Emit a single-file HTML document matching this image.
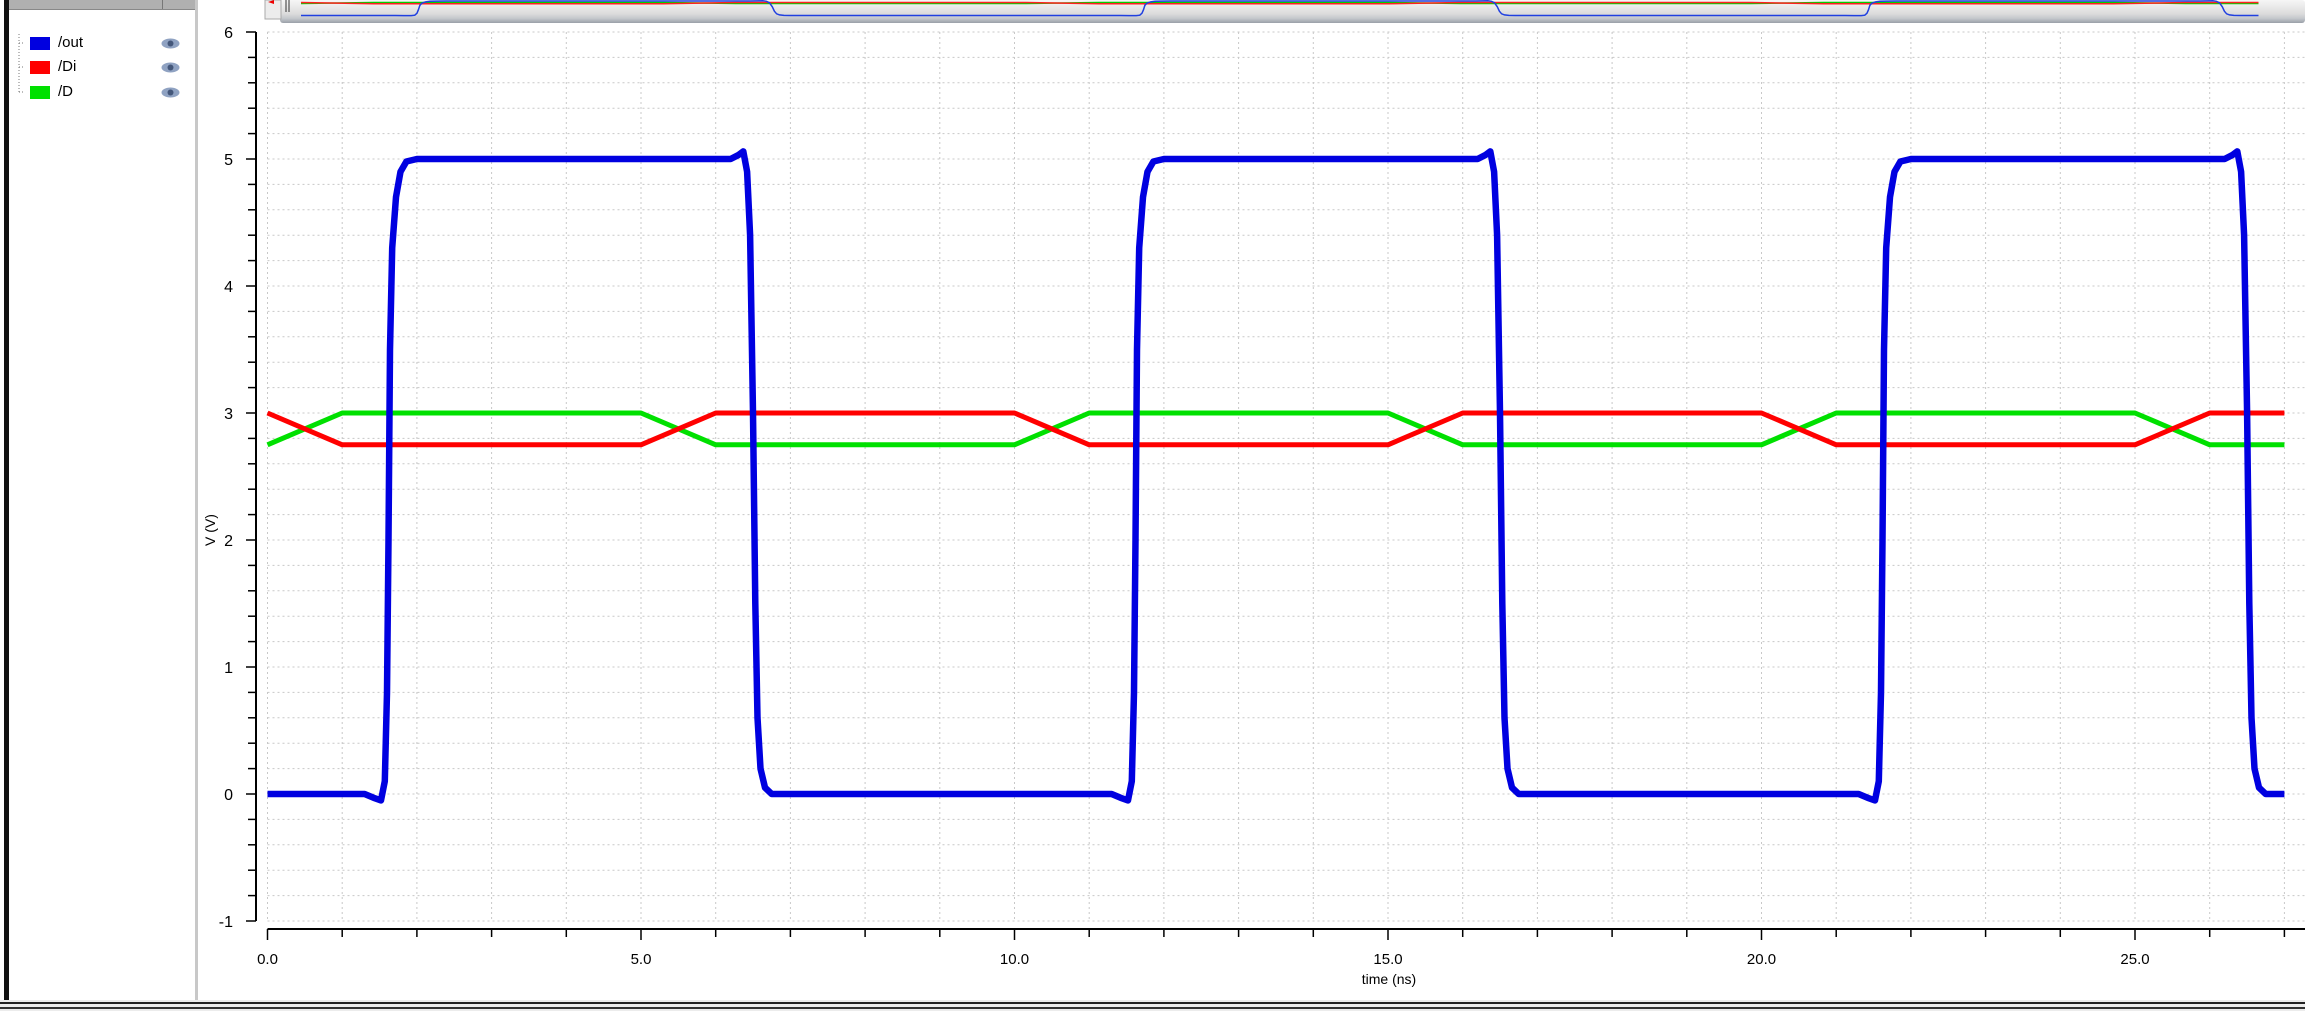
<!DOCTYPE html>
<html><head><meta charset="utf-8">
<style>
html,body{margin:0;padding:0;width:2305px;height:1011px;overflow:hidden;background:#fff;font-family:"Liberation Sans",sans-serif;}
#left{position:absolute;left:0;top:0;width:198px;height:1000px;background:#fff;}
#blk{position:absolute;left:4px;top:0;width:5px;height:1000px;background:#111;}
#hdr{position:absolute;left:9px;top:0;width:187px;height:9px;background:#b0b0b0;border-bottom:1px solid #888;}
#hdiv{position:absolute;left:153px;top:0;width:1px;height:9px;background:#777;}
#rb{position:absolute;left:195px;top:0;width:3px;height:1000px;background:#c8c8c8;}
.sw{position:absolute;left:30px;width:20px;height:13px;}
.lt{position:absolute;left:58px;font-size:15px;color:#000;}
.eye{position:absolute;left:161px;width:19px;height:11px;}
#bot{position:absolute;left:0;top:1000px;width:2305px;height:11px;background:#ececec;}
</style></head><body>
<div id="left">
<div id="blk"></div><div id="hdr"><div id="hdiv"></div></div><div id="rb"></div>
<svg style="position:absolute;left:0;top:0" width="60" height="100"><path d="M19 34V93M19 43H25M19 67H25M19 92H25" stroke="#777" stroke-dasharray="1,2" fill="none"/></svg>
<div class="sw" style="top:37px;background:#0000e0"></div><div class="lt" style="top:34px">/out</div>
<div class="sw" style="top:61px;background:#ff0000"></div><div class="lt" style="top:58px">/Di</div>
<div class="sw" style="top:86px;background:#00e000"></div><div class="lt" style="top:83px">/D</div>
<svg class="eye" style="top:38px" viewBox="0 0 19 11"><ellipse cx="9.5" cy="5.5" rx="9" ry="5" fill="#8fa2c2"/><circle cx="9.5" cy="5.5" r="3" fill="#44577a"/></svg>
<svg class="eye" style="top:62px" viewBox="0 0 19 11"><ellipse cx="9.5" cy="5.5" rx="9" ry="5" fill="#8fa2c2"/><circle cx="9.5" cy="5.5" r="3" fill="#44577a"/></svg>
<svg class="eye" style="top:87px" viewBox="0 0 19 11"><ellipse cx="9.5" cy="5.5" rx="9" ry="5" fill="#8fa2c2"/><circle cx="9.5" cy="5.5" r="3" fill="#44577a"/></svg>
</div>
<svg id="plot" style="position:absolute;left:0;top:0" width="2305" height="1011"></svg>
<div id="bot"><div style="position:absolute;top:2px;left:0;width:100%;height:2px;background:#222"></div><div style="position:absolute;top:7px;left:0;width:100%;height:2px;background:#333"></div></div>
<script>
var X0=267.5,PX=74.7,Y6=32,PV=127;
function X(t){return X0+t*PX}function Y(v){return Y6+(6-v)*PV}
var s='';
s+='<defs><linearGradient id="g" x1="0" y1="0" x2="0" y2="1"><stop offset="0" stop-color="#f6f6f6"/><stop offset="0.6" stop-color="#dcdcdc"/><stop offset="0.8" stop-color="#c4c8cc"/><stop offset="1" stop-color="#9aa0a8"/></linearGradient></defs>';
s+='<rect x="280" y="0" width="2025" height="23" rx="3" fill="url(#g)"/>';
s+='<rect x="265" y="0" width="16" height="19" fill="#ececec" stroke="#aaa"/><path d="M268 2l6-2v4z" fill="#e00"/><path d="M286 0v12M289 0v12" stroke="#333" stroke-width="1"/>';
for(var t=0;t<=27.3;t+=1){var x=X(t).toFixed(1);s+='<line x1="'+x+'" y1="'+Y(6)+'" x2="'+x+'" y2="'+Y(-1)+'" stroke="#c8c8c8" stroke-dasharray="2,3"/>';}
for(var i=0;i<=35;i++){var v=-1+i*0.2,y=Y(v).toFixed(1);s+='<line x1="'+X(0)+'" y1="'+y+'" x2="2305" y2="'+y+'" stroke="#c8c8c8" stroke-dasharray="2,3"/>';
s+='<line x1="'+(i%5==0?246:248)+'" y1="'+y+'" x2="256" y2="'+y+'" stroke="#000" stroke-width="1.5"/>';
if(i%5==0)s+='<text x="233" y="'+(Y(v)+6)+'" font-size="16" text-anchor="end" font-family="Liberation Sans">'+Math.round(v)+'</text>';}
s+='<line x1="256" y1="'+Y(6)+'" x2="256" y2="'+Y(-1)+'" stroke="#000" stroke-width="2"/>';
s+='<line x1="'+X(0)+'" y1="929" x2="2305" y2="929" stroke="#000" stroke-width="2"/>';
for(var t=0;t<=27;t++){var x=X(t);s+='<line x1="'+x+'" y1="929" x2="'+x+'" y2="'+(t%5==0?940:937)+'" stroke="#000" stroke-width="1.5"/>';
if(t%5==0)s+='<text x="'+x+'" y="964" font-size="15" text-anchor="middle" font-family="Liberation Sans">'+t.toFixed(1)+'</text>';}
s+='<text x="1389" y="984" font-size="14" text-anchor="middle" font-family="Liberation Sans">time (ns)</text>';
s+='<text transform="translate(215,530) rotate(-90)" font-size="14" text-anchor="middle" font-family="Liberation Sans">V (V)</text>';
var base=[[0,0],[1.3,0],[1.42,-0.03],[1.52,-0.05],[1.57,0.1],[1.6,0.8],[1.62,2],[1.64,3.5],[1.67,4.3],[1.72,4.7],[1.78,4.9],[1.86,4.98],[2.0,5],[6.2,5],[6.3,5.03],[6.37,5.06],[6.42,4.9],[6.46,4.4],[6.5,3],[6.53,1.5],[6.56,0.6],[6.6,0.2],[6.66,0.05],[6.75,0]];
var pts=[];for(var k=0;k<3;k++)base.forEach(function(p){if(k>0&&p[0]==0)return;if(p[0]+10*k<=27)pts.push([p[0]+10*k,p[1]]);});pts.push([27,0]);
function path(a){return 'M'+a.map(function(p){return X(p[0]).toFixed(1)+' '+Y(p[1]).toFixed(1)}).join('L')}
var r=[[0,3]],g=[[0,2.75]];
for(var k=0;k<3;k++){var o=10*k;r.push([o+1,2.75],[o+5,2.75],[o+6,3],[o+10,3]);g.push([o+1,3],[o+5,3],[o+6,2.75],[o+10,2.75]);}
r=r.filter(function(p){return p[0]<=27});g=g.filter(function(p){return p[0]<=27});r.push([27,3]);g.push([27,2.75]);
s+='<path d="'+path(g)+'" stroke="#00e000" stroke-width="5" fill="none" stroke-linejoin="round"/>';
s+='<path d="'+path(r)+'" stroke="#ff0000" stroke-width="5" fill="none" stroke-linejoin="round"/>';
s+='<path d="'+path(pts)+'" stroke="#0000e0" stroke-width="6.5" fill="none" stroke-linejoin="round"/>';
var OX=301,OP=72.5;function ox(t){return OX+t*OP}
function mini(a,f,col,w){return '<path d="M'+a.map(function(p){return ox(p[0]).toFixed(1)+' '+f(p[1]).toFixed(1)}).join('L')+'" stroke="'+col+'" stroke-width="'+w+'" fill="none"/>'}
s+=mini(g,function(v){return v>2.9?2.5:3.5},'#00d000',1.5);
s+=mini(r,function(v){return v>2.9?2.5:3.8},'#ff2020',1.5);
s+=mini(pts,function(v){return 15.5-v*2.9},'#2040e0',1.5);
document.getElementById('plot').innerHTML=s;
</script>
</body></html>
